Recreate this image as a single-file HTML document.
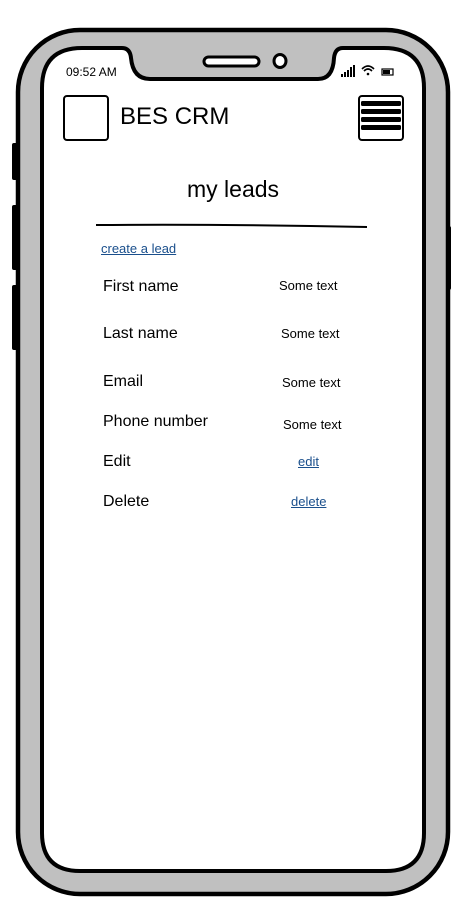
<!DOCTYPE html>
<html><head><style>
body{margin:0;width:468px;height:903px;background:#fff;overflow:hidden;position:relative;font-family:"Liberation Sans",sans-serif}
.t{position:absolute;white-space:nowrap;color:#000}
a{color:#1a4f8c;text-decoration:underline}
</style></head><body>
<svg width="468" height="903" style="position:absolute;left:0;top:0">
<rect x="12" y="143" width="6" height="37" rx="2" fill="#000"/>
<rect x="12" y="205" width="6" height="65" rx="2" fill="#000"/>
<rect x="12" y="285" width="6" height="65" rx="2" fill="#000"/>
<rect x="444" y="226" width="7" height="64" rx="2" fill="#000"/>
<rect x="18" y="30" width="430" height="864" rx="62" fill="#c0c0c0" stroke="#000" stroke-width="4.5"/>
<path d="M82 48 L122 48 Q130 48 131 58 Q133 79 150 79 L318 79 Q333 79 334 58 Q335 48 343 48 L384 48 Q424 48 424 88 L424 833 Q424 871 386 871 L80 871 Q42 871 42 833 L42 88 Q42 48 82 48 Z" fill="#fff" stroke="#000" stroke-width="4"/>
<rect x="204" y="57" width="55" height="9" rx="4.5" fill="#fff" stroke="#000" stroke-width="3"/>
<ellipse cx="280" cy="61" rx="6" ry="6.5" fill="#fff" stroke="#000" stroke-width="3"/>
<g fill="#000"><rect x="341" y="74" width="2" height="3"/><rect x="344" y="72" width="2" height="5"/><rect x="347" y="70" width="2" height="7"/><rect x="350" y="67" width="2" height="10"/><rect x="353" y="65" width="2" height="12"/></g>
<path d="M362 69 Q368 63 374 69 M364 71 Q368 67 372 71" stroke="#000" stroke-width="1.6" fill="none"/><circle cx="368" cy="74" r="1.3"/>
<rect x="382" y="69" width="11" height="6" fill="none" stroke="#000" stroke-width="1.2"/><rect x="383" y="70" width="7" height="4"/>
<rect x="64" y="96" width="44" height="44" rx="3" fill="#fff" stroke="#000" stroke-width="2"/>
<rect x="359" y="96" width="44" height="44" rx="3" fill="#fff" stroke="#000" stroke-width="2"/>
<g fill="#000"><rect x="361" y="101" width="40" height="5" rx="1.5"/><rect x="361" y="109" width="40" height="5" rx="1.5"/><rect x="361" y="117" width="40" height="5" rx="1.5"/><rect x="361" y="125" width="40" height="5" rx="1.5"/></g>
<path d="M96 225 Q230 224 367 227" stroke="#000" stroke-width="2" fill="none"/>
</svg>
<div class="t" style="left:66px;top:65px;font-size:12px">09:52 AM</div>
<div class="t" style="left:120px;top:103px;font-size:24px">BES CRM</div>
<div class="t" style="left:187px;top:176px;font-size:23px">my leads</div>
<div class="t" style="left:101px;top:241px;font-size:13px"><a>create a lead</a></div>
<div class="t" style="left:103px;top:278px;font-size:16px">First name</div>
<div class="t" style="left:279px;top:278px;font-size:13px">Some text</div>
<div class="t" style="left:103px;top:325px;font-size:16px">Last name</div>
<div class="t" style="left:281px;top:326px;font-size:13px">Some text</div>
<div class="t" style="left:103px;top:373px;font-size:16px">Email</div>
<div class="t" style="left:282px;top:375px;font-size:13px">Some text</div>
<div class="t" style="left:103px;top:413px;font-size:16px">Phone number</div>
<div class="t" style="left:283px;top:417px;font-size:13px">Some text</div>
<div class="t" style="left:103px;top:453px;font-size:16px">Edit</div>
<div class="t" style="left:298px;top:454px;font-size:13px"><a>edit</a></div>
<div class="t" style="left:103px;top:493px;font-size:16px">Delete</div>
<div class="t" style="left:291px;top:494px;font-size:13px"><a>delete</a></div>
</body></html>
